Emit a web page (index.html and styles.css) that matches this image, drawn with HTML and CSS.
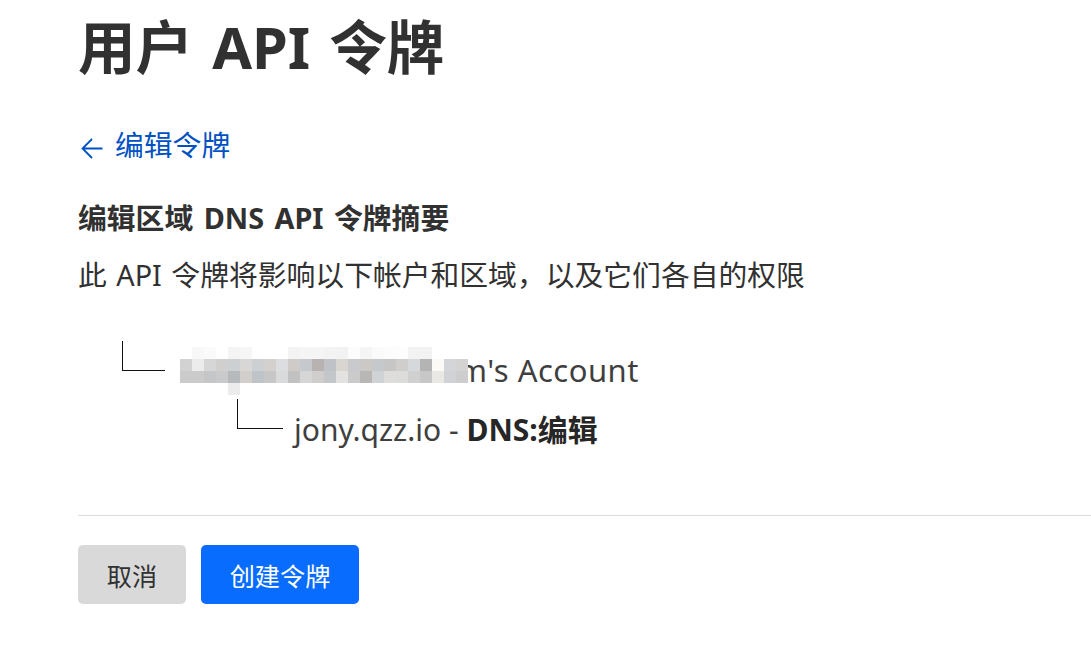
FILE: index.html
```html
<!DOCTYPE html>
<html lang="zh-CN">
<head>
<meta charset="utf-8">
<title>用户 API 令牌</title>
<link rel="stylesheet" href="styles.css">
</head>
<body>
<main class="page">
  <h1 class="title">用户 API 令牌</h1>
  <a class="back" href="#">
    <svg class="back-icon" width="22" height="21" viewBox="0 0 22 21" aria-hidden="true">
      <path d="M21.5 10.5H2M11 1L1.5 10.5 11 20" fill="none" stroke="currentColor" stroke-width="1.8"/>
    </svg>
    <span>编辑令牌</span>
  </a>
  <h2 class="summary-title">编辑区域 DNS API 令牌摘要</h2>
  <p class="summary-desc">此 API 令牌将影响以下帐户和区域，以及它们各自的权限</p>

  <ul class="tree">
    <li class="tree-row">
      <span class="branch"></span>
      <span class="mosaic" aria-label="已隐藏">
        <i></i><i style="background:#f8f8f8"></i><i style="background:#fafafa"></i><i></i><i style="background:#f4f4f4"></i><i style="background:#f6f6f6"></i><i></i><i></i><i></i><i style="background:#f3f3f3"></i><i style="background:#f5f5f5"></i><i style="background:#f5f5f5"></i><i style="background:#f3f3f3"></i><i style="background:#f2f2f2"></i><i style="background:#fcfcfc"></i><i style="background:#f5f5f5"></i><i style="background:#fafafa"></i><i style="background:#fcfcfc"></i><i style="background:#fdfdfd"></i><i style="background:#f2f2f2"></i><i style="background:#f2f2f2"></i><i></i><i></i><i></i>
        <i style="background:#d2d2d2"></i><i style="background:#ececec"></i><i style="background:#d6d6d6"></i><i style="background:#d0cfce"></i><i style="background:#cdd0d3"></i><i style="background:#d9d7d5"></i><i style="background:#cdd0d3"></i><i style="background:#d3d0ce"></i><i style="background:#dcdde0"></i><i style="background:#cfcbc9"></i><i style="background:#c5c9cd"></i><i style="background:#b8b3b0"></i><i style="background:#bfc3c7"></i><i style="background:#d9d6d2"></i><i style="background:#c9cacd"></i><i style="background:#cbc8c6"></i><i style="background:#c5c9cc"></i><i style="background:#c6c6c6"></i><i style="background:#cfcecd"></i><i style="background:#d6d9db"></i><i style="background:#b4b4b4"></i><i style="background:#fbfaf7"></i><i style="background:#d3d5d8"></i><i style="background:#d4d3d2"></i>
        <i style="background:#cbcbcb"></i><i style="background:#cbcbcb"></i><i style="background:#c4c6c7"></i><i style="background:#c9cacb"></i><i style="background:#b7babd"></i><i style="background:#d2cecb"></i><i style="background:#bfc4c8"></i><i style="background:#c7c7c7"></i><i style="background:#d9dadb"></i><i style="background:#c1c1c1"></i><i style="background:#d6d6d6"></i><i style="background:#cfcecd"></i><i style="background:#c3c7ca"></i><i style="background:#e3e2e0"></i><i style="background:#cbcbcb"></i><i style="background:#b9b7b5"></i><i style="background:#cfd3d6"></i><i style="background:#dedddb"></i><i style="background:#dcdcdb"></i><i style="background:#d0d0d0"></i><i style="background:#c7c7c7"></i><i style="background:#e9e8e4"></i><i style="background:#d0d2d5"></i><i style="background:#cdcdcd"></i>
        <i></i><i></i><i></i><i></i><i style="background:#ececec"></i>
      </span><span class="account-name">m's Account</span>
    </li>
    <li class="tree-row tree-row-child">
      <span class="branch"></span>
      <span class="zone">jony.qzz.io - <strong>DNS:编辑</strong></span>
    </li>
  </ul>

  <hr class="divider">

  <div class="actions">
    <button class="btn btn-cancel" type="button">取消</button>
    <button class="btn btn-primary" type="button">创建令牌</button>
  </div>
</main>
</body>
</html>
```

FILE: styles.css
```css
* {
  box-sizing: border-box;
}

html, body {
  margin: 0;
  padding: 0;
  background: #ffffff;
  overflow: hidden;
}

body {
  font-family: "Noto Sans", "Noto Sans CJK SC", sans-serif;
  color: #333333;
}

.page {
  padding: 13px 0 0 78px;
}

.title {
  margin: 0;
  font-size: 57.6px;
  line-height: 67px;
  font-weight: 700;
  word-spacing: 4px;
  color: #313131;
}

.back {
  display: flex;
  align-items: center;
  margin-top: 44px;
  height: 42px;
  font-size: 28.8px;
  line-height: 42px;
  color: #0051c3;
  text-decoration: none;
}

.back-icon {
  margin-left: 3px;
  margin-right: 12px;
  margin-top: 7px;
  flex: none;
}

.summary-title {
  margin: 31px 0 0;
  font-size: 28.8px;
  line-height: 42px;
  font-weight: 700;
  word-spacing: 3px;
  color: #313131;
}

.summary-desc {
  margin: 15px 0 0;
  font-size: 28.8px;
  line-height: 42px;
  word-spacing: 2px;
  color: #313131;
}

.tree {
  list-style: none;
  margin: 45px 0 0;
  padding: 0 0 0 44px;
}

.tree-row {
  display: flex;
  align-items: center;
  height: 58px;
  font-size: 30px;
  color: #3f3f3f;
}

.tree-row-child {
  margin-left: 115px;
}

.branch {
  flex: none;
  width: 43px;
  height: 58px;
  margin-right: 15px;
  display: flex;
  flex-direction: column;
}

.branch::before {
  content: "";
  display: block;
  height: 29px;
  border-left: 1px solid #111111;
  border-bottom: 1px solid #111111;
}

.tree-row-child .branch {
  width: 46px;
  margin-right: 11px;
}

.mosaic {
  flex: none;
  position: relative;
  z-index: 1;
  display: grid;
  grid-template-columns: repeat(24, 12px);
  grid-auto-rows: 12px;
  margin-top: 2px;
  margin-right: -10px;
}

.mosaic i {
  display: block;
  width: 12px;
  height: 12px;
}

.account-name {
  font-size: 31px;
  letter-spacing: 0.5px;
}

.zone strong {
  font-weight: 700;
  color: #262626;
}

.divider {
  margin: 58px 0 0;
  border: 0;
  border-top: 1px solid #dcdcdc;
  height: 0;
}

.actions {
  display: flex;
  gap: 15px;
  margin-top: 29px;
}

.btn {
  height: 59px;
  padding: 0;
  border: 0;
  border-radius: 5px;
  font-family: "Noto Sans", "Noto Sans CJK SC", sans-serif;
  font-size: 25.2px;
  cursor: pointer;
}

.btn-cancel {
  background: #d9d9d9;
  color: #313131;
  width: 108px;
}

.btn-primary {
  background: #086cff;
  color: #ffffff;
  width: 158px;
}
```
